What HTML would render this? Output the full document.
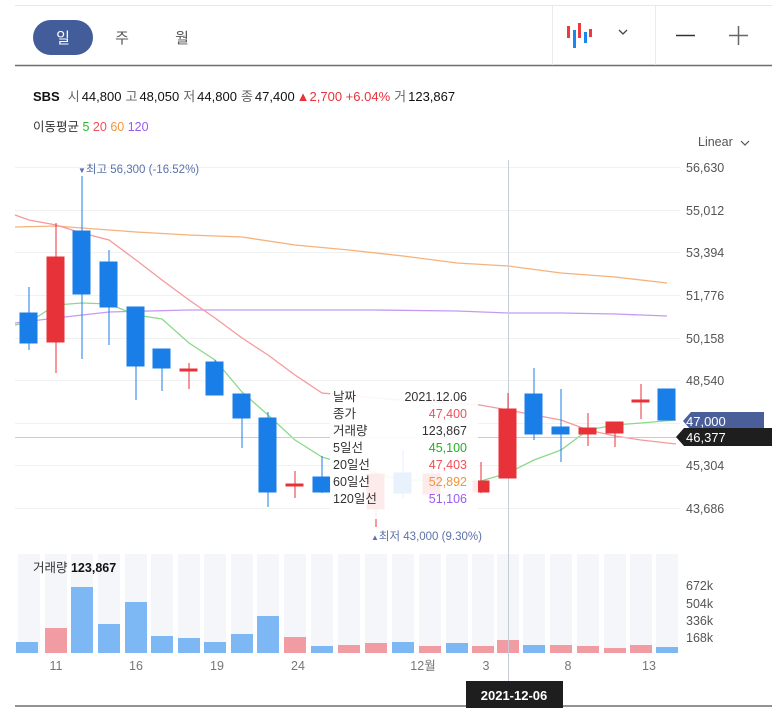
<!DOCTYPE html>
<html><head><meta charset="utf-8"><style>
body{margin:0;width:772px;height:708px;overflow:hidden;background:#fff;font-family:"Liberation Sans","Noto Sans CJK KR",sans-serif;}
svg text{font-family:"Liberation Sans","Noto Sans CJK KR",sans-serif;}
</style></head><body>
<svg width="772" height="708" xmlns="http://www.w3.org/2000/svg">
<line x1="15" y1="5.5" x2="772" y2="5.5" stroke="#e8e8e8"/>
<line x1="15" y1="65.5" x2="772" y2="65.5" stroke="#6b6e73" stroke-width="1.5"/>
<line x1="552.5" y1="6" x2="552.5" y2="65" stroke="#ececec"/>
<line x1="655.5" y1="6" x2="655.5" y2="65" stroke="#ececec"/>
<rect x="33" y="20" width="60" height="35" rx="17.5" fill="#435d9a"/>
<text x="63" y="43" font-size="15" fill="#fff" text-anchor="middle">일</text>
<text x="122" y="43" font-size="15" fill="#555" text-anchor="middle">주</text>
<text x="182" y="43" font-size="15" fill="#555" text-anchor="middle">월</text>
<rect x="567" y="26" width="3" height="12" fill="#ee3a3f"/>
<rect x="573" y="30" width="3" height="18" fill="#1a86f0"/>
<rect x="578" y="23" width="3" height="15" fill="#ee3a3f"/>
<rect x="584" y="32" width="3" height="11" fill="#1a86f0"/>
<rect x="589" y="29" width="3" height="8" fill="#ee3a3f"/>
<polyline points="619,30 623,34 627,30" fill="none" stroke="#444" stroke-width="1.3"/>
<line x1="676" y1="35.5" x2="695" y2="35.5" stroke="#333" stroke-width="1.5"/>
<line x1="729" y1="35.5" x2="748" y2="35.5" stroke="#666" stroke-width="1.5"/>
<line x1="738.5" y1="26" x2="738.5" y2="45" stroke="#666" stroke-width="1.5"/>
<text x="33" y="101" font-size="13" fill="#111"><tspan font-weight="bold">SBS</tspan><tspan fill="#666" dx="8">시</tspan><tspan dx="2">44,800</tspan><tspan fill="#666" dx="4">고</tspan><tspan dx="2">48,050</tspan><tspan fill="#666" dx="4">저</tspan><tspan dx="2">44,800</tspan><tspan fill="#666" dx="4">종</tspan><tspan dx="2">47,400</tspan><tspan fill="#e8323a" dx="2">▲2,700 +6.04%</tspan><tspan fill="#666" dx="4">거</tspan><tspan dx="2">123,867</tspan></text>
<text x="33" y="131" font-size="12.5" fill="#333">이동평균 <tspan fill="#2fb52f">5</tspan> <tspan fill="#f0505a">20</tspan> <tspan fill="#f5933a">60</tspan> <tspan fill="#9a5cf0">120</tspan></text>
<text x="698" y="146" font-size="12.5" fill="#555">Linear</text>
<polyline points="741,141 745,145 749,141" fill="none" stroke="#555" stroke-width="1.2"/>
<g stroke="#f1f1f1">
<line x1="15" y1="167.5" x2="680" y2="167.5"/><line x1="15" y1="210.5" x2="680" y2="210.5"/><line x1="15" y1="252.5" x2="680" y2="252.5"/><line x1="15" y1="295.5" x2="680" y2="295.5"/><line x1="15" y1="338.5" x2="680" y2="338.5"/><line x1="15" y1="380.5" x2="680" y2="380.5"/><line x1="15" y1="423.5" x2="680" y2="423.5"/><line x1="15" y1="465.5" x2="680" y2="465.5"/><line x1="15" y1="508.5" x2="680" y2="508.5"/>
</g>
<g font-size="12.5" fill="#555">
<text x="686" y="172">56,630</text><text x="686" y="215">55,012</text><text x="686" y="257">53,394</text><text x="686" y="300">51,776</text><text x="686" y="343">50,158</text><text x="686" y="385">48,540</text><text x="686" y="470">45,304</text><text x="686" y="513">43,686</text>
</g>
<g fill="#f5f6fa">
<rect x="18" y="554" width="22" height="99"/><rect x="45" y="554" width="22" height="99"/><rect x="71" y="554" width="22" height="99"/><rect x="98" y="554" width="22" height="99"/><rect x="125" y="554" width="22" height="99"/><rect x="151" y="554" width="22" height="99"/><rect x="178" y="554" width="22" height="99"/><rect x="204" y="554" width="22" height="99"/><rect x="231" y="554" width="22" height="99"/><rect x="257" y="554" width="22" height="99"/><rect x="284" y="554" width="22" height="99"/><rect x="311" y="554" width="22" height="99"/><rect x="338" y="554" width="22" height="99"/><rect x="365" y="554" width="22" height="99"/><rect x="392" y="554" width="22" height="99"/><rect x="419" y="554" width="22" height="99"/><rect x="446" y="554" width="22" height="99"/><rect x="472" y="554" width="22" height="99"/><rect x="497" y="554" width="22" height="99"/><rect x="523" y="554" width="22" height="99"/><rect x="550" y="554" width="22" height="99"/><rect x="577" y="554" width="22" height="99"/><rect x="604" y="554" width="22" height="99"/><rect x="630" y="554" width="22" height="99"/><rect x="656" y="554" width="22" height="99"/>
</g>
<g fill="#7db8f5">
<rect x="16" y="642" width="22" height="11"/><rect x="71" y="587" width="22" height="66"/><rect x="98" y="624" width="22" height="29"/><rect x="125" y="602" width="22" height="51"/><rect x="151" y="636" width="22" height="17"/><rect x="178" y="638" width="22" height="15"/><rect x="204" y="642" width="22" height="11"/><rect x="231" y="634" width="22" height="19"/><rect x="257" y="616" width="22" height="37"/><rect x="311" y="646" width="22" height="7"/><rect x="392" y="642" width="22" height="11"/><rect x="446" y="643" width="22" height="10"/><rect x="523" y="645" width="22" height="8"/><rect x="656" y="647" width="22" height="6"/>
</g>
<g fill="#f09ca2">
<rect x="45" y="628" width="22" height="25"/><rect x="284" y="637" width="22" height="16"/><rect x="338" y="645" width="22" height="8"/><rect x="365" y="643" width="22" height="10"/><rect x="419" y="646" width="22" height="7"/><rect x="472" y="646" width="22" height="7"/><rect x="497" y="640" width="22" height="13"/><rect x="550" y="645" width="22" height="8"/><rect x="577" y="646" width="22" height="7"/><rect x="604" y="648" width="22" height="5"/><rect x="630" y="645" width="22" height="8"/>
</g>
<text x="33" y="572" font-size="12.5" fill="#333">거래량 <tspan fill="#111" font-weight="bold">123,867</tspan></text>
<g font-size="12.5" fill="#555">
<text x="686" y="590">672k</text><text x="686" y="608">504k</text><text x="686" y="625">336k</text><text x="686" y="642">168k</text>
</g>
<g font-size="12.5" fill="#777" text-anchor="middle">
<text x="56" y="670">11</text><text x="136" y="670">16</text><text x="217" y="670">19</text><text x="298" y="670">24</text><text x="423" y="670">12월</text><text x="486" y="670">3</text><text x="568" y="670">8</text><text x="649" y="670">13</text>
</g>
<line x1="15" y1="706" x2="772" y2="706" stroke="#6b6e73" stroke-width="1.5"/>
<polyline fill="none" stroke="#f5b27a" stroke-width="1.3" points="15,227 56,226 82,228 136,232 189,235 242,237 295,245 349,250 403,256 457,263 508,266 561,273 615,277 667,283"/>
<polyline fill="none" stroke="#c49af5" stroke-width="1.3" points="15,323 56,318 109,312 189,310 295,310 376,310 457,311 508,313 561,313 615,314 667,316"/>
<polyline fill="none" stroke="#f5999c" stroke-width="1.3" points="15,215 29,220 56,225 82,233 109,240 136,260 162,280 189,300 215,318 242,338 268,355 295,375 322,393 400,400 480,405 508,410 534,415 561,420 588,430 615,436 641,440 676,444"/>
<polyline fill="none" stroke="#8cd98c" stroke-width="1.3" points="15,325 29,322 56,305 82,303 109,304 136,315 162,319 189,343 215,360 242,392 268,415 295,440 322,457 400,480 481,481 508,473 534,460 561,450 588,430 615,425 641,423 676,420"/>
<line x1="508.5" y1="160" x2="508.5" y2="681" stroke="#c8cbd8"/>
<line x1="15" y1="437.5" x2="680" y2="437.5" stroke="#c8cbd8"/>
<g stroke="#1a7ee8" fill="#1a7ee8">
<line x1="29" y1="287" x2="29" y2="350"/><rect x="20" y="313" width="17" height="30"/>
<line x1="82" y1="176" x2="82" y2="359"/><rect x="73" y="231" width="17" height="63"/>
<line x1="109" y1="250" x2="109" y2="345"/><rect x="100" y="262" width="17" height="45"/>
<line x1="136" y1="307" x2="136" y2="400"/><rect x="127" y="307" width="17" height="59"/>
<line x1="162" y1="349" x2="162" y2="391"/><rect x="153" y="349" width="17" height="19"/>
<line x1="215" y1="360" x2="215" y2="395"/><rect x="206" y="362" width="17" height="33"/>
<line x1="242" y1="394" x2="242" y2="448"/><rect x="233" y="394" width="17" height="24"/>
<line x1="268" y1="412" x2="268" y2="507"/><rect x="259" y="418" width="17" height="74"/>
<line x1="322" y1="456" x2="322" y2="493"/><rect x="313" y="477" width="17" height="15"/>
<line x1="403" y1="450" x2="403" y2="498"/><rect x="394" y="473" width="17" height="20"/>
<line x1="534" y1="368" x2="534" y2="440"/><rect x="525" y="394" width="17" height="40"/>
<line x1="561" y1="389" x2="561" y2="462"/><rect x="552" y="427" width="17" height="7"/>
<rect x="658" y="389" width="17" height="31"/>
</g>
<g stroke="#e8323a" fill="#e8323a">
<line x1="56" y1="223" x2="56" y2="373"/><rect x="47" y="257" width="17" height="85"/>
<line x1="189" y1="363" x2="189" y2="389"/><rect x="180" y="369" width="17" height="2"/>
<line x1="295" y1="471" x2="295" y2="498"/><rect x="286" y="484" width="17" height="2"/>
<rect x="367" y="474" width="17" height="35"/>
<line x1="376" y1="500" x2="376" y2="527"/>
<line x1="432" y1="460" x2="432" y2="502"/><rect x="423" y="474" width="17" height="20"/>
<line x1="481" y1="462" x2="481" y2="493"/><rect x="473" y="481" width="16" height="11"/>
<line x1="508" y1="393" x2="508" y2="478"/><rect x="499" y="409" width="17" height="69"/>
<line x1="588" y1="413" x2="588" y2="446"/><rect x="579" y="428" width="17" height="6"/>
<line x1="615" y1="422" x2="615" y2="447"/><rect x="606" y="422" width="17" height="11"/>
<line x1="641" y1="384" x2="641" y2="419"/><rect x="632" y="400" width="17" height="2"/>
</g>
<rect x="330" y="383" width="148" height="136" fill="#fff" opacity="0.9"/>
<g font-size="12.5">
<text x="333" y="401" fill="#333">날짜</text><text x="467" y="401" fill="#333" text-anchor="end">2021.12.06</text>
<text x="333" y="418" fill="#333">종가</text><text x="467" y="418" fill="#f0505a" text-anchor="end">47,400</text>
<text x="333" y="435" fill="#333">거래량</text><text x="467" y="435" fill="#333" text-anchor="end">123,867</text>
<text x="333" y="452" fill="#333">5일선</text><text x="467" y="452" fill="#22b022" text-anchor="end">45,100</text>
<text x="333" y="469" fill="#333">20일선</text><text x="467" y="469" fill="#f0505a" text-anchor="end">47,403</text>
<text x="333" y="486" fill="#333">60일선</text><text x="467" y="486" fill="#f5933a" text-anchor="end">52,892</text>
<text x="333" y="503" fill="#333">120일선</text><text x="467" y="503" fill="#9a5cf0" text-anchor="end">51,106</text>
</g>
<text x="78" y="173" font-size="11.5" fill="#5b72aa"><tspan font-size="8">▼</tspan>최고 56,300 (-16.52%)</text>
<text x="371" y="540" font-size="11.5" fill="#5b72aa"><tspan font-size="8">▲</tspan>최저 43,000 (9.30%)</text>
<path d="M683,421 L691,412 H764 V430 H691 Z" fill="#4a5f9a"/>
<text x="686" y="426" font-size="13" fill="#fff">47,000</text>
<path d="M676,437 L684,428 H772 V446 H684 Z" fill="#1e1e1e"/>
<text x="686" y="442" font-size="13" fill="#fff">46,377</text>
<rect x="466" y="681" width="97" height="27" fill="#1e1e1e"/>
<text x="514" y="700" font-size="13" font-weight="bold" fill="#fff" text-anchor="middle">2021-12-06</text>
</svg>
</body></html>
